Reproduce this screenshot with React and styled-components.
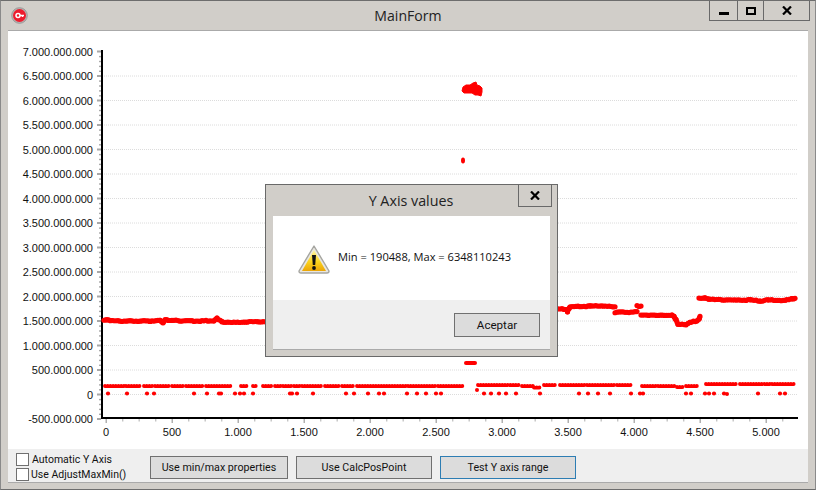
import React from "react";
import styled, { createGlobalStyle } from "styled-components";

const Global = createGlobalStyle`
  html, body { margin: 0; padding: 0; background: #d1cec9; }
  * { box-sizing: border-box; }
`;

const UI_FONT = `"Open Sans", "Noto Sans", sans-serif`;
const CONTROL_FONT = `Roboto, "Open Sans", sans-serif`;

const Window = styled.div`
  position: relative;
  width: 816px;
  height: 490px;
  display: flex;
  flex-direction: column;
  background: #d1cec9;
  border: 1px solid #6d6d6d;
  border-left-color: #8a8a8a;
  border-right-color: #8a8a8a;
  font-family: ${UI_FONT};
  color: #111;
  overflow: hidden;
`;

const TitleBar = styled.header`
  height: 29px;
  flex: none;
  display: grid;
  grid-template-columns: 1fr auto 1fr;
  align-items: start;
  padding: 0 5px 0 0;
`;

const AppIconSlot = styled.div`
  padding: 6px 0 0 10px;
  line-height: 0;
`;

const WindowTitle = styled.h1`
  margin: 0 0 0 5px;
  padding-top: 6px;
  font-size: 14.1px;
  line-height: 18px;
  font-weight: 400;
  color: #222;
`;

const CaptionButtons = styled.div`
  justify-self: end;
  display: flex;
  height: 20px;
  border: 1px solid #696969;
  border-top: 0;
`;

const CaptionButton = styled.div`
  width: ${(p) => p.$w}px;
  display: flex;
  align-items: center;
  justify-content: center;
  border-left: ${(p) => (p.$first ? "0" : "1px solid #696969")};
`;

const Client = styled.main`
  flex: 1;
  margin: 0 7px 6px;
  display: flex;
  flex-direction: column;
  border-top: 1px solid #aaa;
  border-bottom: 1px solid #aaa;
`;

const ChartArea = styled.section`
  height: 418px;
  flex: none;
  background: #fff;
  line-height: 0;
`;

const BottomPanel = styled.section`
  flex: 1;
  background: #efefef;
  display: flex;
  align-items: flex-start;
  padding: 4px 0 0 8px;
`;

const CheckColumn = styled.div`
  width: 134px;
  display: flex;
  flex-direction: column;
  gap: 2px;
`;

const CheckRow = styled.label`
  display: flex;
  align-items: center;
  height: 13px;
  gap: ${(p) => p.$gap}px;
  font-family: ${CONTROL_FONT};
  font-size: 10.5px;
  white-space: nowrap;
  color: #111;
`;

const CheckBox = styled.span`
  width: 13px;
  height: 13px;
  flex: none;
  background: #fff;
  border: 1px solid #707070;
`;

const ButtonRow = styled.div`
  display: flex;
  gap: 8px;
  padding-top: 3px;
`;

const Button = styled.button`
  width: ${(p) => p.$w}px;
  height: ${(p) => p.$h || 23}px;
  padding: 0;
  background: #dcdcdc;
  border: 1px solid ${(p) => (p.$focused ? "#2d7db3" : "#707070")};
  border-radius: 0;
  font-family: ${CONTROL_FONT};
  font-size: ${(p) => p.$size || 10.7}px;
  color: #111;
`;

const Dialog = styled.div`
  position: absolute;
  left: 264px;
  top: 183px;
  width: 293px;
  height: 173px;
  display: flex;
  flex-direction: column;
  background: #d1cec9;
  border: 1px solid #696969;
  padding: 0 7px;
`;

const DialogBar = styled.div`
  height: 31px;
  flex: none;
  margin: 0 -2px 0 0;
  display: grid;
  grid-template-columns: 1fr auto 1fr;
  align-items: start;
`;

const DialogTitle = styled.div`
  padding-top: 7px;
  font-size: 14.3px;
  line-height: 18px;
  color: #222;
  margin-left: -3px;
`;

const DialogClose = styled.div`
  grid-column: 3;
  justify-self: end;
  width: 34px;
  height: 22px;
  display: flex;
  align-items: center;
  justify-content: center;
  border: 1px solid #696969;
  border-top: 0;
`;

const DialogBody = styled.div`
  height: 84px;
  flex: none;
  background: #fff;
  display: flex;
  align-items: flex-start;
  gap: 8px;
  padding: 29px 0 0 25px;
`;

const DialogText = styled.p`
  margin: 0;
  padding-top: 4px;
  font-size: 11.1px;
  line-height: 16px;
  white-space: nowrap;
  color: #111;
`;

const DialogFooter = styled.div`
  height: 50px;
  flex: none;
  background: #efefef;
  border-bottom: 1px solid #aaa;
  display: flex;
  justify-content: flex-end;
  align-items: flex-start;
  padding: 13px 10px 0 0;
`;

const ChartLabel = styled.text`
  font-family: "Liberation Sans", Arial, sans-serif;
  font-size: 11px;
  fill: #111;
`;

const RED = "#ff0000";
const X0 = 106;
const XSTEP = 66;
const Y0 = 394;
const YSTEP = 24.5;

const yLabels = [
  "-500.000.000", "0", "500.000.000", "1.000.000.000", "1.500.000.000", "2.000.000.000",
  "2.500.000.000", "3.000.000.000", "3.500.000.000", "4.000.000.000", "4.500.000.000",
  "5.000.000.000", "5.500.000.000", "6.000.000.000", "6.500.000.000", "7.000.000.000",
];
const xLabels = ["0", "500", "1.000", "1.500", "2.000", "2.500", "3.000", "3.500", "4.000", "4.500", "5.000"];

const dashes = [
  [105, 124, 386], [126, 140, 386], [144, 153, 386], [155, 169, 386], [172, 183, 386], [186, 204, 386],
  [206, 232, 386], [241, 248, 386], [253, 257, 386], [263, 273, 386], [275, 281, 386], [283, 293, 386],
  [294, 300, 386], [302, 323, 386], [325, 340, 386], [342, 353, 386], [357, 407, 386], [408, 437, 386],
  [438, 463, 386], [478, 520, 385], [522, 533, 386], [534, 542, 387.5], [544, 557, 385], [560, 585, 385],
  [587, 615, 385], [617, 632, 385], [642, 657, 386], [658, 675, 386], [677, 684, 387], [686, 697, 386],
  [706, 737, 384], [740, 770, 384], [772, 795, 384],
];

const dots = [
  108, 127, 147, 154, 194, 207, 219, 221, 235, 240, 244, 253, 290, 292, 297, 313, 346, 354, 368, 379, 384,
  407, 417, 426, 436, 441, 484, 491, 499, 506, 516, 540, 579, 588, 598, 610, 631, 640, 643, 686, 691,
  705, 709, 714, 724, 758, 780, 785,
];

const traces = [
  [[104, 320], [107, 319.5], [112, 321], [150, 321], [160, 320.5], [163, 323], [165, 319.5], [170, 320.5], [200, 321], [214, 320.5], [217, 318.5], [222, 322], [265, 322]],
  [[556, 309], [566, 309], [567.5, 311.5], [570, 307], [590, 306], [615, 306.5]],
  [[615, 312.5], [637, 312]],
  [[637, 306], [641, 306]],
  [[641, 315], [672, 315], [674, 316], [676, 320], [678, 324.5], [686, 324.5], [690, 322], [697, 321], [699, 319], [700, 316]],
  [[699, 298], [705, 298], [709, 299.5], [750, 300], [760, 301], [768, 300], [785, 300.5], [792, 298.5], [795, 298.5]],
];

// Deterministic scatter, so the plotted samples have the rough edge of real data.
const jitter = (x, amount) => ((Math.sin(x * 12.9898) * 43758.5453) % 1) * amount;

const sampleTrace = (points) => {
  const out = [];
  for (let i = 0; i < points.length - 1; i++) {
    const [ax, ay] = points[i];
    const [bx, by] = points[i + 1];
    const n = Math.max(1, Math.round(Math.hypot(bx - ax, by - ay) / 2));
    for (let k = 0; k <= n; k++) {
      const x = ax + ((bx - ax) * k) / n;
      out.push([x, ay + ((by - ay) * k) / n + jitter(x, 0.5)]);
    }
  }
  return out;
};

const traceSamples = traces.flatMap(sampleTrace);

const Chart = () => {
  const minorY = [];
  for (let i = 0; i < 75; i++) {
    if (i % 5) minorY.push(418.5 - i * 4.9);
  }
  const minorX = [];
  for (let i = 0; i < 42; i++) {
    const x = X0 + i * (XSTEP / 4);
    if (i % 4 && x < 797) minorX.push(x);
  }
  return (
    <svg width="801" height="418" viewBox="8 31 801 418">
      {yLabels.map((l, i) => {
        const y = Y0 - (i - 1) * YSTEP;
        return (
          <g key={l}>
            {i > 0 && i < 15 && (
              <line x1="104" x2="797" y1={y + 0.5} y2={y + 0.5} stroke="#dcdcdc" strokeDasharray="1 1" />
            )}
            <rect x="97" y={y - 0.5} width="4" height="2" fill="#a8a8a8" />
            <ChartLabel x="93" y={y + 4.5} textAnchor="end">{l}</ChartLabel>
          </g>
        );
      })}
      {minorY.map((y) => (
        <rect key={y} x="99" y={y} width="2" height="1.4" fill="#a8a8a8" />
      ))}
      {xLabels.map((l, i) => {
        const x = X0 + i * XSTEP;
        return (
          <g key={l}>
            <rect x={x - 0.5} y="419" width="1.5" height="4" fill="#b0b0b0" />
            <ChartLabel x={x} y="436" textAnchor="middle">{l}</ChartLabel>
          </g>
        );
      })}
      {minorX.map((x) => (
        <rect key={x} x={x - 0.5} y="419" width="1.4" height="2.5" fill="#c4c4c4" />
      ))}

      <rect x="101" y="50" width="2" height="369" fill="#000" />
      <rect x="101" y="417" width="697" height="2" fill="#000" />

      {traceSamples.map(([x, y], i) => (
        <circle key={i} cx={x} cy={y} r="2.6" fill={RED} />
      ))}
      {dashes.map(([a, b, y]) => (
        <line
          key={a}
          x1={a}
          x2={b}
          y1={y}
          y2={y}
          stroke={RED}
          strokeWidth="3.9"
          strokeLinecap="round"
          strokeDasharray="0 2.7"
        />
      ))}
      {dots.map((x) => (
        <circle key={x} cx={x} cy="393.5" r="2.1" fill={RED} />
      ))}
      <circle cx="477" cy="390" r="2" fill={RED} />
      <circle cx="727" cy="394" r="2" fill={RED} />
      <line x1="466" x2="475" y1="363" y2="363" stroke={RED} strokeWidth="4" strokeLinecap="round" />
      <ellipse cx="463" cy="160.5" rx="2" ry="3" fill={RED} />
      <path
        d="M462 91 L463 87 L466 85 L470 85 L473 83 L476 82 L477 85 L480 86 L482 88 L482 92 L481 96 L478 95 L475 95 L472 93 L468 93 L464 93 Z"
        fill={RED}
        stroke={RED}
      />
    </svg>
  );
};

const AppIcon = () => (
  <svg width="17" height="17" viewBox="0 0 17 17">
    <circle cx="8.5" cy="8.5" r="7.8" fill="#b9b4b0" stroke="#999" />
    <circle cx="8.5" cy="8.5" r="6.5" fill="#ed1c2e" />
    <circle cx="7" cy="8.5" r="2" fill="none" stroke="#fff" strokeWidth="1.5" />
    <path d="M9 8.5H13M11.5 8.5v1.4" stroke="#fff" strokeWidth="1.3" />
  </svg>
);

const CloseGlyph = () => (
  <svg width="10" height="9" viewBox="0 0 10 9">
    <path d="M1 0.5 L9 8.5 M9 0.5 L1 8.5" stroke="#000" strokeWidth="2.2" />
  </svg>
);

const MinGlyph = () => (
  <svg width="10" height="10" viewBox="0 0 10 10">
    <rect x="0" y="6" width="10" height="3" fill="#000" />
  </svg>
);

const MaxGlyph = () => (
  <svg width="10" height="8" viewBox="0 0 10 8">
    <rect x="1" y="1" width="8" height="6" fill="none" stroke="#000" strokeWidth="2" />
  </svg>
);

const WarningIcon = () => (
  <svg width="32" height="29" viewBox="0 0 32 29">
    <defs>
      <linearGradient id="warn" x1="0" y1="0" x2="0" y2="1">
        <stop offset="0" stopColor="#fff6a8" />
        <stop offset="0.55" stopColor="#fbd41e" />
        <stop offset="1" stopColor="#eba506" />
      </linearGradient>
    </defs>
    <path d="M16 1 L31 26 Q31 28 29 28 L3 28 Q1 28 1 26 Z" fill="#e8e6e0" stroke="#a5a5a0" strokeWidth="1.4" strokeLinejoin="round" />
    <path d="M16 5 L28 26 L4 26 Z" fill="url(#warn)" />
    <path d="M14 10 L18 10 L17.2 20 L14.8 20 Z" fill="#111" />
    <circle cx="16" cy="23" r="1.9" fill="#111" />
  </svg>
);

export default function App() {
  return (
    <>
      <Global />
      <Window>
        <TitleBar>
          <AppIconSlot>
            <AppIcon />
          </AppIconSlot>
          <WindowTitle>MainForm</WindowTitle>
          <CaptionButtons>
            <CaptionButton $w={27} $first>
              <MinGlyph />
            </CaptionButton>
            <CaptionButton $w={26}>
              <MaxGlyph />
            </CaptionButton>
            <CaptionButton $w={46}>
              <CloseGlyph />
            </CaptionButton>
          </CaptionButtons>
        </TitleBar>
        <Client>
          <ChartArea>
            <Chart />
          </ChartArea>
          <BottomPanel>
            <CheckColumn>
              <CheckRow $gap={3}>
                <CheckBox />
                Automatic Y Axis
              </CheckRow>
              <CheckRow $gap={2}>
                <CheckBox />
                Use AdjustMaxMin()
              </CheckRow>
            </CheckColumn>
            <ButtonRow>
              <Button $w={138}>Use min/max properties</Button>
              <Button $w={136}>Use CalcPosPoint</Button>
              <Button $w={136} $focused>Test Y axis range</Button>
            </ButtonRow>
          </BottomPanel>
        </Client>
        <Dialog>
          <DialogBar>
            <span />
            <DialogTitle>Y Axis values</DialogTitle>
            <DialogClose>
              <CloseGlyph />
            </DialogClose>
          </DialogBar>
          <DialogBody>
            <WarningIcon />
            <DialogText>Min = 190488, Max = 6348110243</DialogText>
          </DialogBody>
          <DialogFooter>
            <Button $w={86} $h={24} $size={11.6}>Aceptar</Button>
          </DialogFooter>
        </Dialog>
      </Window>
    </>
  );
}
